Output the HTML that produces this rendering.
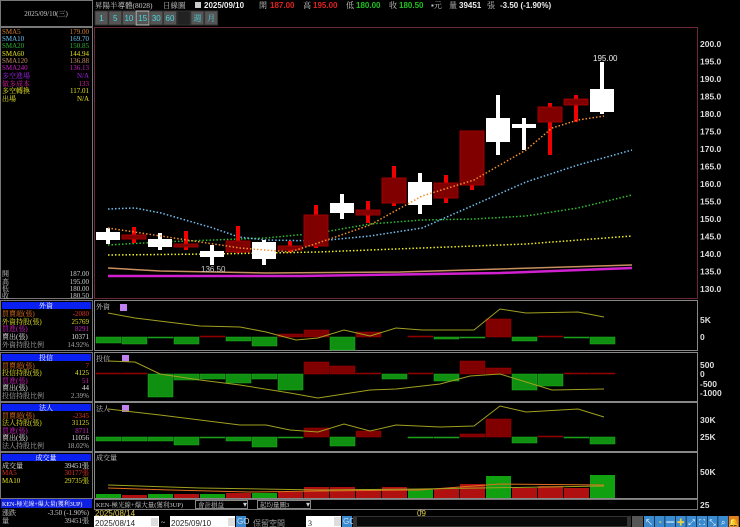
<!DOCTYPE html>
<html><head><meta charset="utf-8">
<style>
html,body{margin:0;padding:0;background:#000;width:740px;height:527px;overflow:hidden}
svg{display:block}
text{font-family:"Liberation Serif","Noto Serif CJK SC","WenQuanYi Zen Hei",serif;font-size:8px}
.l text{font-size:7px}
.s{font-family:"Liberation Sans","Noto Sans CJK TC",sans-serif}
.ax{font-family:"Liberation Sans",sans-serif;font-size:8.5px;fill:#ddd;font-weight:bold}
</style></head><body>
<svg id="g" width="740" height="527" xmlns="http://www.w3.org/2000/svg">
<rect width="740" height="527" fill="#000"/>
<g class="l">
<rect x="0.5" y="0.5" width="92" height="26" fill="none" stroke="#777"/>
<text x="46" y="16" fill="#ccc" text-anchor="middle">2025/09/10(三)</text>
<rect x="0.5" y="27.5" width="92" height="271" fill="none" stroke="#777"/>
<text x="2" y="34" fill="#d08030">SMA5</text><text x="89" y="34" fill="#d08030" text-anchor="end">179.00</text>
<text x="2" y="41" fill="#6ac0f0">SMA10</text><text x="89" y="41" fill="#6ac0f0" text-anchor="end">169.70</text>
<text x="2" y="48" fill="#30b030">SMA20</text><text x="89" y="48" fill="#30b030" text-anchor="end">150.85</text>
<text x="2" y="56" fill="#e0e020">SMA60</text><text x="89" y="56" fill="#e0e020" text-anchor="end">144.94</text>
<text x="2" y="63" fill="#c09060">SMA120</text><text x="89" y="63" fill="#c09060" text-anchor="end">136.88</text>
<text x="2" y="70" fill="#c020c0">SMA240</text><text x="89" y="70" fill="#c020c0" text-anchor="end">136.13</text>
<text x="2" y="78" fill="#a020e0">多空進場</text><text x="89" y="78" fill="#a020e0" text-anchor="end">N/A</text>
<text x="2" y="86" fill="#d020a0">做多成本</text><text x="89" y="86" fill="#d020a0" text-anchor="end">133</text>
<text x="2" y="93" fill="#e0e020">多空轉換</text><text x="89" y="93" fill="#e0e020" text-anchor="end">117.01</text>
<text x="2" y="101" fill="#e0e020">出場</text><text x="89" y="101" fill="#e0e020" text-anchor="end">N/A</text>
<text x="2" y="276" fill="#ccc">開</text><text x="89" y="276" fill="#ccc" text-anchor="end">187.00</text>
<text x="2" y="284" fill="#ccc">高</text><text x="89" y="284" fill="#ccc" text-anchor="end">195.00</text>
<text x="2" y="291" fill="#ccc">低</text><text x="89" y="291" fill="#ccc" text-anchor="end">180.00</text>
<text x="2" y="298" fill="#ccc">收</text><text x="89" y="298" fill="#ccc" text-anchor="end">180.50</text>
<rect x="0.5" y="300.5" width="92" height="50" fill="none" stroke="#777"/>
<rect x="2" y="302" width="89" height="7" fill="#0a20f0"/><text x="46" y="308" fill="#fff" text-anchor="middle">外資</text>
<text x="2" y="316" fill="#e07020">買賣超(張)</text><text x="89" y="316" fill="#e03020" text-anchor="end">-2080</text>
<text x="2" y="324" fill="#e0e020">外資持股(張)</text><text x="89" y="324" fill="#e0e020" text-anchor="end">25769</text>
<text x="2" y="331" fill="#d020c0">買進(張)</text><text x="89" y="331" fill="#d020c0" text-anchor="end">8291</text>
<text x="2" y="339" fill="#e0e0e0">賣出(張)</text><text x="89" y="339" fill="#e0e0e0" text-anchor="end">10371</text>
<text x="2" y="347" fill="#aaa">外資持股比例</text><text x="89" y="347" fill="#aaa" text-anchor="end">14.92%</text>
<rect x="0.5" y="352.5" width="92" height="49" fill="none" stroke="#777"/>
<rect x="2" y="354" width="89" height="7" fill="#0a20f0"/><text x="46" y="360" fill="#fff" text-anchor="middle">投信</text>
<text x="2" y="368" fill="#e07020">買賣超(張)</text><text x="89" y="368" fill="#e03020" text-anchor="end">7</text>
<text x="2" y="375" fill="#e0e020">投信持股(張)</text><text x="89" y="375" fill="#e0e020" text-anchor="end">4125</text>
<text x="2" y="383" fill="#d020c0">買進(張)</text><text x="89" y="383" fill="#d020c0" text-anchor="end">51</text>
<text x="2" y="390" fill="#e0e0e0">賣出(張)</text><text x="89" y="390" fill="#e0e0e0" text-anchor="end">44</text>
<text x="2" y="398" fill="#aaa">投信持股比例</text><text x="89" y="398" fill="#aaa" text-anchor="end">2.39%</text>
<rect x="0.5" y="402.5" width="92" height="49" fill="none" stroke="#777"/>
<rect x="2" y="404" width="89" height="7" fill="#0a20f0"/><text x="46" y="410" fill="#fff" text-anchor="middle">法人</text>
<text x="2" y="418" fill="#e07020">買賣超(張)</text><text x="89" y="418" fill="#e03020" text-anchor="end">-2345</text>
<text x="2" y="425" fill="#e0e020">法人持股(張)</text><text x="89" y="425" fill="#e0e020" text-anchor="end">31125</text>
<text x="2" y="433" fill="#d020c0">買進(張)</text><text x="89" y="433" fill="#d020c0" text-anchor="end">8711</text>
<text x="2" y="440" fill="#e0e0e0">賣出(張)</text><text x="89" y="440" fill="#e0e0e0" text-anchor="end">11056</text>
<text x="2" y="448" fill="#aaa">法人持股比例</text><text x="89" y="448" fill="#aaa" text-anchor="end">18.02%</text>
<rect x="0.5" y="452.5" width="92" height="46" fill="none" stroke="#777"/>
<rect x="2" y="454" width="89" height="7" fill="#0a20f0"/><text x="46" y="460" fill="#fff" text-anchor="middle">成交量</text>
<text x="2" y="468" fill="#e0e0e0">成交量</text><text x="89" y="468" fill="#e0e0e0" text-anchor="end">39451張</text>
<text x="2" y="475" fill="#e03020">MA5</text><text x="89" y="475" fill="#e03020" text-anchor="end">30177張</text>
<text x="2" y="483" fill="#e0e020">MA10</text><text x="89" y="483" fill="#e0e020" text-anchor="end">29735張</text>
<rect x="1" y="499" width="91" height="9" fill="#1020e0"/><text x="2" y="506" fill="#fff" style="font-size:6px">KEN-極光線+爆大量(獲利3UP)</text>
<text x="2" y="515" fill="#ccc">漲跌</text><text x="89" y="515" fill="#ccc" text-anchor="end">-3.50 (-1.90%)</text>
<text x="2" y="523" fill="#ccc">量</text><text x="89" y="523" fill="#ccc" text-anchor="end">39451張</text>
</g>

<text x="95" y="8" fill="#ccc" style="font-size:7.5px">昇陽半導體(8028)</text>
<text x="163" y="8" fill="#ccc" style="font-size:7.5px">日線圖</text>
<rect x="195" y="2" width="6" height="6" fill="#ccc"/>
<text x="204" y="8" class="s" fill="#eee" font-weight="bold" font-size="9">2025/09/10</text>
<text x="259" y="8" fill="#ccc">開</text><text x="270" y="8" class="s" fill="#e02020" font-weight="bold" font-size="8.5">187.00</text>
<text x="303" y="8" fill="#ccc">高</text><text x="313" y="8" class="s" fill="#e02020" font-weight="bold" font-size="8.5">195.00</text>
<text x="346" y="8" fill="#ccc">低</text><text x="356" y="8" class="s" fill="#20c020" font-weight="bold" font-size="8.5">180.00</text>
<text x="389" y="8" fill="#ccc">收</text><text x="399" y="8" class="s" fill="#20c020" font-weight="bold" font-size="8.5">180.50</text>
<text x="431" y="8" fill="#ccc">▪元</text>
<text x="449" y="8" fill="#ccc">量</text><text x="459" y="8" class="s" fill="#eee" font-weight="bold" font-size="8.5">39451</text>
<text x="487" y="8" fill="#ccc">張</text>
<text x="500" y="8" class="s" fill="#eee" font-weight="bold" font-size="8.5">-3.50 (-1.90%)</text>
<g id="btns"></g>

<rect x="94.5" y="27.5" width="603" height="271" fill="none" stroke="#6a2838"/>
<g id="axis"></g>
<g id="main"></g>
<rect x="94.5" y="300.5" width="603" height="50" fill="none" stroke="#888"/>
<rect x="94.5" y="352.5" width="603" height="49" fill="none" stroke="#888"/>
<rect x="94.5" y="402.5" width="603" height="49" fill="none" stroke="#888"/>
<rect x="94.5" y="452.5" width="603" height="46" fill="none" stroke="#888"/>
<text x="96" y="309" fill="#ccc" style="font-size:7px">外資</text><rect x="120" y="304" width="7" height="7" fill="#c080f0"/>
<text x="96" y="361" fill="#ccc" style="font-size:7px">投信</text><rect x="122" y="355" width="7" height="7" fill="#c080f0"/>
<text x="96" y="411" fill="#ccc" style="font-size:7px">法人</text><rect x="122" y="405" width="7" height="7" fill="#c080f0"/>
<text x="96" y="460" fill="#ccc" style="font-size:7px">成交量</text>
<text x="700" y="323" class="ax">5K</text><text x="700" y="340" class="ax">0</text>
<text x="700" y="368" class="ax">500</text><text x="700" y="377" class="ax">0</text><text x="700" y="387" class="ax">-500</text><text x="700" y="396" class="ax">-1000</text>
<text x="700" y="423" class="ax">30K</text><text x="700" y="440" class="ax">25K</text>
<text x="700" y="475" class="ax">50K</text><text x="700" y="508" class="ax">25</text>
<g id="low"></g>
<rect x="94.5" y="499.5" width="603" height="10" fill="#000" stroke="#777"/>
<text x="96" y="507" fill="#ccc" style="font-size:6.5px">KEN-極光線+爆大量(獲利3UP)</text>
<rect x="195.5" y="500.5" width="52" height="8" fill="#000" stroke="#888"/><text x="198" y="507" fill="#ccc" style="font-size:6.5px">會計損益</text><text x="243" y="507" fill="#ccc" font-size="6">▾</text>
<rect x="257.5" y="500.5" width="53" height="8" fill="#000" stroke="#888"/><text x="260" y="507" fill="#ccc" style="font-size:6.5px">起均量圖3</text><text x="306" y="507" fill="#ccc" font-size="6">▾</text>
<line x1="109" y1="509" x2="109" y2="512" stroke="#aaa"/><line x1="421" y1="509" x2="421" y2="512" stroke="#aaa"/>
<text x="95" y="516" class="s" fill="#e0d050" font-size="7">2025/08/14</text>
<text x="417" y="516" class="s" fill="#e0d050" font-size="7">09</text>
<rect x="94" y="516" width="65" height="11" fill="#fff"/><text x="95" y="526" class="s" fill="#222" font-size="10">2025/08/14</text>
<rect x="151" y="518" width="7" height="8" fill="#ddd"/>
<text x="161" y="525" fill="#ccc" font-size="9">~</text>
<rect x="170" y="516" width="65" height="11" fill="#fff"/><text x="171" y="526" class="s" fill="#222" font-size="10">2025/09/10</text>
<rect x="228" y="518" width="7" height="8" fill="#ddd"/>
<rect x="236" y="516" width="10" height="11" fill="#3a8ad0"/><text x="237" y="524" class="s" fill="#cde" font-size="6">GO</text>
<text x="253" y="526" fill="#999" font-size="12" class="s">保留空間</text>
<rect x="306" y="516" width="35" height="11" fill="#fff"/><text x="308" y="526" fill="#222" font-size="10">3</text>
<rect x="334" y="517" width="7" height="9" fill="#ddd"/>
<rect x="342" y="516" width="10" height="11" fill="#3a8ad0"/><text x="343" y="524" class="s" fill="#cde" font-size="6">GO</text>
<rect x="353" y="516" width="278" height="11" fill="#333"/><rect x="357" y="517" width="270" height="9" fill="#0a0a0a"/>
<g id="icons"></g>
</svg>
<script>
var NS="http://www.w3.org/2000/svg";
function el(p,t,a){var e=document.createElementNS(NS,t);for(var k in a)e.setAttribute(k,a[k]);document.getElementById(p).appendChild(e);return e;}
var bl=["1","5","10","15","30","60","","週","月"];
bl.forEach(function(b,i){var x=95+i*13.7;el("btns","rect",{x:x,y:11,width:13,height:14,fill:i==6?"#222":"#555",stroke:i==3?"#bbb":"#333"});
var t=el("btns","text",{x:x+6.5,y:21,fill:"#4cd6e0","text-anchor":"middle","font-size":"8.5",class:i<6?"s":""});t.textContent=b;});
for(var p=200;p>=130;p-=5){var y=44+(200-p)*3.5;var t=el("axis","text",{x:700,y:y+3,class:"ax"});t.textContent=p.toFixed(1);}
function pl(pts,col,w,dash){el("main","polyline",{points:pts,fill:"none",stroke:col,"stroke-width":w,"stroke-dasharray":dash||""});}
pl("108,268 160,271 266,273 400,272 632,265","#c89060",1.5);
pl("108,276 300,276 500,273 632,268","#d020d0",2.5);
pl("108,255 213,254 318,252 422,248 526,244 632,236","#f0f020",1.5,"1.5,2");
pl("108,245 161,242 213,240 266,238 318,233 370,224 422,220 474,219 526,216 578,208 632,195","#30c030",1.5,"1.5,2");
pl("108,209 135,208 161,213 213,228 239,237 266,240 318,241 370,236 422,228 474,205 526,182 578,165 632,150","#70c0f0",1.5,"1.5,2");
var C=[[232,240,228,244,0],[235,239,227,243,1],[239,247,233,250,0],[244,247,231,250,1],[251,257,245,265,0],[241,252,226,253,1],[242,259,240,265,0],[246,250,241,252,1],[215,246,205,248,1],[203,213,194,219,0],[210,215,201,223,1],[178,203,166,206,1],[182,205,173,214,0],[183,198,175,203,1],[131,185,131,190,1],[118,142,95,155,0],[124,128,118,150,0],[107,122,103,155,1],[99,105,95,122,1],[89,112,62,114,0]];
C.forEach(function(c,i){var x=108+26*i;
el("main","rect",{x:x-2,y:c[2],width:4,height:c[3]-c[2],fill:c[4]?"#f00000":"#fff"});
el("main","rect",{x:x-12,y:c[0],width:24,height:Math.max(2,c[1]-c[0]),fill:c[4]?"#800000":"#fff",stroke:c[4]?"#a00000":"none"});});
pl("108,228 187,240 240,248 290,252 318,243 370,225 422,196 474,180 526,150 552,128 578,120 604,116","#f09030",1.5,"1.5,2");
var t=el("main","text",{x:201,y:272,fill:"#ccc",class:"s","font-size":"8"});t.textContent="136.50";
t=el("main","text",{x:593,y:61,fill:"#eee",class:"s","font-size":"8"});t.textContent="195.00";
var G="#109010",R="#800000";
function bars(z,d){d.forEach(function(v,i){var x=96+26*i;if(v==0)return;var up=v<0;
el("low","rect",{x:x,y:up?z+v:z,width:25,height:Math.max(1,Math.abs(v)),fill:up?R:G,stroke:up?"#a00000":"#20b020","stroke-width":0.5});});}
bars(337,[6,7,1,7,-1,4,9,-3,-7,13,-5,0,-1,2,1,-18,4,-1,1,7]);
bars(374,[-1,-1,23,6,5,9,5,16,-12,-8,-1,5,-1,7,-13,-6,16,12,-1,-1]);
bars(437,[4,4,4,8,1,4,10,1,-9,9,-6,0,1,1,-3,-18,6,-1,1,7]);
var V=[4,3,4,4,4,5,5,6,11,11,9,11,9,9,14,22,10,12,10,23];
V.forEach(function(h,i){var x=96+26*i;var g=[0,2,4,6,12,15,19].indexOf(i)>=0;el("low","rect",{x:x,y:498-h,width:25,height:h,fill:g?"#10a010":"#b01010"});});
function ln(pts,col){el("low","polyline",{points:pts,fill:"none",stroke:col,"stroke-width":1});}
ln("108,313 135,318 200,326 240,327 266,332 296,340 318,338 344,330 370,336 396,328 422,330 474,330 500,309 526,313 578,312 604,317","#a0a020");
ln("108,361 135,362 160,374 200,380 240,385 290,393 318,398 370,390 396,389 440,384 470,376 500,374 526,382 552,390 604,389","#a0a020");
ln("108,409 160,415 240,425 266,425 290,430 318,432 344,424 370,431 396,425 440,427 474,426 500,406 526,412 578,409 604,417","#a0a020");
ln("108,488 170,490 250,492 320,491 420,490 500,484 604,485","#e07020");
ln("108,485 200,488 320,490 420,489 604,486","#a0a020");
var ic=["#3a8ad0","#3a8ad0","#3a8ad0","#3a8ad0","#3a8ad0","#3a8ad0","#3a8ad0","#3a8ad0","#e08020"];
ic.forEach(function(c,i){el("icons","rect",{x:644+i*10.6,y:516,width:10,height:11,fill:c});});
var sy=["↖","◔","━","✚","⤢","⛶","⤡","⌕","🔔"];
sy.forEach(function(s,i){var t=el("icons","text",{x:649+i*10.6,y:525,fill:i==1||i==3?"#f0d040":"#fff","text-anchor":"middle","font-size":"8",class:"s"});t.textContent=s;});
el("icons","rect",{x:632,y:516,width:11,height:11,fill:"#555"});
</script>
</body></html>
